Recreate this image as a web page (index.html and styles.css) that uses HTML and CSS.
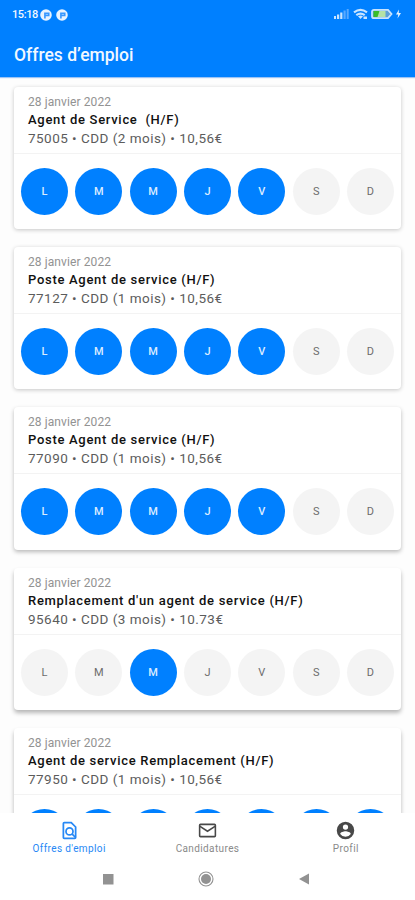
FILE: index.html
```
<!DOCTYPE html>
<html lang="fr">
<head>
<meta charset="utf-8">
<title>Offres d'emploi</title>
<link rel="stylesheet" href="styles.css">
</head>
<body>
<div class="screen">
  <header class="appbar">
    <div class="status">
      <div class="status-left">
        <span class="clock">15:18</span>
        <svg width="12" height="12" viewBox="0 0 11 11"><circle cx="5.5" cy="5.5" r="5.3" fill="#e8f3ff"/><path d="M4.500 8.600V4h3.500v2h-3" fill="none" stroke="#3797ff" stroke-width="1.500"/></svg>
        <svg width="12" height="12" viewBox="0 0 11 11"><circle cx="5.5" cy="5.5" r="5.3" fill="#e8f3ff"/><path d="M4.500 8.600V4h3.500v2h-3" fill="none" stroke="#3797ff" stroke-width="1.500"/></svg>
      </div>
      <svg class="status-right" width="70" height="12" viewBox="0 0 70 12">
        <g fill="#c9e4ff"><rect x="0" y="8" width="2" height="3"/><rect x="3" y="6.5" width="2.2" height="4.5"/><rect x="6.2" y="4.5" width="2.2" height="6.5"/></g>
        <g fill="#58a9ff"><rect x="9.5" y="2.5" width="2.2" height="8.5"/><rect x="12.7" y="1" width="2" height="10"/></g>
        <g fill="none" stroke="#c9e4ff" stroke-width="2.200"><path d="M20 4.300q6.500-5 13 0"/><path d="M22.300 7.200q4.200-3.300 8.400 0"/></g>
        <path d="M24 8.300q2.500-1.600 5 0L26.500 11zM29.500 8.500h3.500V11h-3.500z" fill="#c9e4ff"/>
        <path d="M40 1.800h14l3.500 4.200-3.500 4.200H40q-2 0-2-2V3.800q0-2 2-2z" fill="#5b9fd8" stroke="#c9e4ff" stroke-width="1.800"/>
        <rect x="39.500" y="3" width="6" height="6" fill="#39bd2a"/><path d="M45.500 3h6v6h-8z" fill="#b5e2a5"/>
        <path d="M65 1.500l-3 5h2.300l-.8 4 3.500-5.500h-2.300z" fill="#e5f2ff"/>
      </svg>
    </div>
    <h1>Offres d’emploi</h1>
  </header>

  <main class="list">
    <article class="card">
      <div class="info">
        <p class="date">28 janvier 2022</p>
        <h2>Agent de Service  (H/F)</h2>
        <p class="meta">75005 • CDD (2 mois) • 10,56€</p>
      </div>
      <div class="days"><span class="on">L</span><span class="on">M</span><span class="on">M</span><span class="on">J</span><span class="on">V</span><span>S</span><span>D</span></div>
    </article>
    <article class="card">
      <div class="info">
        <p class="date">28 janvier 2022</p>
        <h2>Poste Agent de service (H/F)</h2>
        <p class="meta">77127 • CDD (1 mois) • 10,56€</p>
      </div>
      <div class="days"><span class="on">L</span><span class="on">M</span><span class="on">M</span><span class="on">J</span><span class="on">V</span><span>S</span><span>D</span></div>
    </article>
    <article class="card mid">
      <div class="info">
        <p class="date">28 janvier 2022</p>
        <h2>Poste Agent de service (H/F)</h2>
        <p class="meta">77090 • CDD (1 mois) • 10,56€</p>
      </div>
      <div class="days"><span class="on">L</span><span class="on">M</span><span class="on">M</span><span class="on">J</span><span class="on">V</span><span>S</span><span>D</span></div>
    </article>
    <article class="card low">
      <div class="info">
        <p class="date">28 janvier 2022</p>
        <h2>Remplacement d'un agent de service (H/F)</h2>
        <p class="meta">95640 • CDD (3 mois) • 10.73€</p>
      </div>
      <div class="days"><span>L</span><span>M</span><span class="on">M</span><span>J</span><span>V</span><span>S</span><span>D</span></div>
    </article>
    <article class="card low">
      <div class="info">
        <p class="date">28 janvier 2022</p>
        <h2>Agent de service Remplacement (H/F)</h2>
        <p class="meta">77950 • CDD (1 mois) • 10,56€</p>
      </div>
      <div class="days"><span class="on"></span><span class="on"></span><span class="on"></span><span class="on"></span><span class="on"></span><span class="on"></span><span class="on"></span></div>
    </article>
  </main>

  <nav class="tabs">
    <div class="tab active">
      <svg width="21" height="21" viewBox="0 0 24 24" fill="none" stroke="currentColor" stroke-width="2"><path d="M14 3H6Q5 3 5 4v16q0 1 1 1h12q1 0 1-1V8z"/><circle cx="12" cy="13" r="4"/><path d="M14.800 15.800L19 20"/></svg>
      <span>Offres d'emploi</span>
    </div>
    <div class="tab">
      <svg width="21" height="21" viewBox="0 0 24 24" fill="none" stroke="currentColor" stroke-width="1.800"><rect x="3" y="5" width="18" height="14" rx="1"/><path d="M3 7l9 5.800L21 7"/></svg>
      <span>Candidatures</span>
    </div>
    <div class="tab">
      <svg width="21" height="21" viewBox="0 0 24 24" fill="currentColor"><path d="M12 2a10 10 0 1 0 0 20 10 10 0 0 0 0-20zm0 3a3 3 0 1 1 0 6 3 3 0 0 1 0-6zm0 14.200a7.200 7.200 0 0 1-6-3.220c.03-1.990 4-3.080 6-3.080s5.970 1.090 6 3.080a7.200 7.200 0 0 1-6 3.220z"/></svg>
      <span>Profil</span>
    </div>
  </nav>
  <div class="sysnav">
    <svg width="16" height="16" viewBox="0 0 16 16"><rect x="3" y="3" width="10.500" height="10.500" fill="#929292"/></svg>
    <svg width="16" height="16" viewBox="0 0 16 16"><circle cx="8" cy="8" r="5" fill="#929292"/><circle cx="8" cy="8" r="7" fill="none" stroke="#929292" stroke-width="1.100"/></svg>
    <svg width="16" height="16" viewBox="0 0 16 16"><path d="M13 2.500v11L3 8z" fill="#929292"/></svg>
  </div>
</div>
</body>
</html>
```
FILE: styles.css
```
* { box-sizing: border-box; margin: 0; padding: 0; }

body {
  background: #fdfdfd;
  font-family: Roboto, "Liberation Sans", sans-serif;
}

.screen {
  width: 415px;
  height: 900px;
  display: flex;
  flex-direction: column;
  overflow: hidden;
}

.appbar {
  flex: none;
  height: 77px;
  background: #0080ff;
  color: #f2f8ff;
  box-shadow: 0 1px 1px #9cc4f5;
}

.status {
  height: 32px;
  padding: 8px 11px 0 12px;
  display: flex;
  justify-content: space-between;
  align-items: flex-start;
}

.status-left { display: flex; gap: 3px; align-items: center; }
.clock { width: 25px; font-size: 11px; line-height: 13px; font-weight: 500; letter-spacing: -.4px; }
.status-left svg:last-child { margin-left: 1px; }

h1 {
  padding-left: 14px;
  font-size: 17.500px;
  line-height: 47px;
  font-weight: 500;
}

.list {
  flex: 1;
  min-height: 0;
  overflow: hidden;
  padding: 9.600px 14px 0;
  display: flex;
  flex-direction: column;
  gap: 18px;
}

.card {
  flex: none;
  height: 142.350px;
  background: #fff;
  border-radius: 4px;
  box-shadow: 0 1px 4px rgba(0, 0, 0, .22);
}

.card.mid { box-shadow: 0 2px 4px rgba(0, 0, 0, .27); }
.card.low { box-shadow: 0 3px 4px rgba(0, 0, 0, .28); }

.info {
  height: 67px;
  padding: 7px 14px 0;
  border-bottom: 1px solid #f3f3f3;
}

.date { font-size: 12px; line-height: 17px; color: #929292; letter-spacing: .1px; }
h2 { font-size: 13px; line-height: 18px; font-weight: 500; color: #111; letter-spacing: .7px; white-space: pre; }
.meta { font-size: 13.500px; line-height: 18px; color: #5c5c5c; letter-spacing: .47px; }

.days {
  display: flex;
  justify-content: space-between;
  padding: 14px 7px 0;
}

.days span {
  width: 47px;
  height: 47px;
  border-radius: 50%;
  background: #f4f4f4;
  color: #6c6c6c;
  font-size: 11px;
  line-height: 48px;
  text-align: center;
}

.days .on { background: #0080ff; color: #dcecff; font-weight: 500; }

.tabs {
  flex: none;
  height: 46px;
  padding-top: 7px;
  display: flex;
  background: #fff;
  color: #484848;
}

.tab { flex: 1; display: flex; flex-direction: column; align-items: center; }
.tab span { font-size: 10px; line-height: 16px; color: #8a8a8a; letter-spacing: .38px; }
.tab.active, .tab.active span { color: #2688f5; }

.sysnav {
  flex: none;
  height: 41px;
  padding: 12px 0 0 100px;
  display: flex;
  gap: 82px;
  background: #fff;
}
```
